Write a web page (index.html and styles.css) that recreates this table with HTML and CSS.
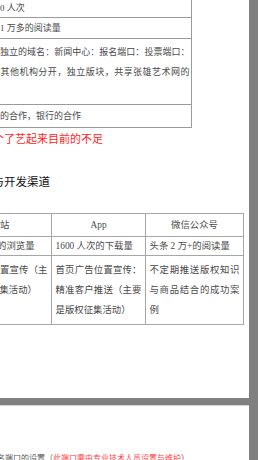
FILE: index.html
```html
<!DOCTYPE html>
<html lang="zh">
<head>
<meta charset="utf-8">
<link rel="stylesheet" href="styles.css">
</head>
<body>
<div class="page page1">
  <div class="t1">
    <div class="r1 ra">800 人次</div>
    <div class="r1 rb">约1 万多的阅读量</div>
    <div class="r1 rc">有独立的域名：新闻中心：报名端口：投票端口：与其他机构分开，独立版块，共享张雄艺术网的</div>
    <div class="r1 rd">与的合作，银行的合作</div>
  </div>
  <p class="note">这个了艺起来目前的不足</p>
  <h2 class="heading">推广与开发渠道</h2>
  <div class="t2">
    <div class="c hd">网站</div>
    <div class="c hd">App</div>
    <div class="c hd">微信公众号</div>
    <div class="c r2">12000 人次的浏览量</div>
    <div class="c r2">1600 人次的下载量</div>
    <div class="c r2">头条 2 万+的阅读量</div>
    <div class="c r3">首页广告位置宣传（主要是版权征集活动）</div>
    <div class="c r3">首页广告位置宣传：精准客户推送（主要是版权征集活动）</div>
    <div class="c r3">不定期推送版权知识与商品结合的成功案例</div>
  </div>
</div>
<div class="page page2">
  <p class="foot">报名端口的设置（<span class="red">此端口需由专业技术人员设置与维护</span>）</p>
</div>
</body>
</html>
```
FILE: styles.css
```css
* { box-sizing: border-box; }
html, body { margin: 0; padding: 0; }
body {
  background: #808080;
  font-family: "Liberation Serif", "Noto Sans CJK SC", serif;
  color: #4a4a4a;
}
.page {
  width: 249px;
  background: #fff;
  overflow: hidden;
}
.page1 { height: 398px; }
.page2 {
  margin-top: 7px;
  height: 55px;
  padding-top: 43px;
  border-top: 1px solid #d4d4d4;
}

.t1 {
  margin-top: -6px;
  margin-left: -14px;
  width: 206px;
  border: 1px solid #9a9a9a;
}
.r1 {
  font-size: 9px;
  line-height: 20px;
  padding: 0 1.5px 0 4px;
  border-bottom: 1px solid #9a9a9a;
  text-align: justify;
  white-space: nowrap;
}
.ra { height: 23px; padding-top: 3px; }
.rb { height: 21px; padding-top: 0; }
.rc { height: 66px; padding-top: 3px; white-space: normal; text-align-last: justify; }
.rd { height: 22px; padding-top: 1px; border-bottom: none; }

.note {
  margin: 0 0 0 -18px;
  height: 20px;
  font-family: "Noto Sans CJK SC", sans-serif;
  font-size: 11px;
  line-height: 20px;
  color: #ff2525;
  white-space: nowrap;
}
.heading {
  margin: 23px 0 0 -30.5px;
  height: 20px;
  font-family: "Noto Sans CJK SC", sans-serif;
  font-size: 11.5px;
  font-weight: normal;
  line-height: 20px;
  color: #111;
  white-space: nowrap;
}
.t2 {
  margin: 22px 0 0 -52px;
  width: 296px;
  display: grid;
  grid-template-columns: 103px 94px 98px;
  border-left: 1px solid #a6a6a6;
  border-top: 1px solid #a6a6a6;
}
.c {
  border-right: 1px solid #a6a6a6;
  border-bottom: 1px solid #a6a6a6;
  padding: 0 3.5px;
  font-size: 9.4px;
  line-height: 20px;
}
.hd { height: 23px; padding-top: 1px; text-align: center; }
.r2 { height: 19px; line-height: 18px; white-space: nowrap; }
.r3 { height: 69px; padding-top: 4px; text-align: justify; }

.foot {
  margin: 0 0 0 -11px;
  font-size: 8px;
  line-height: 20px;
  white-space: nowrap;
  color: #555;
}
.foot .red { color: #ff4040; }
```
